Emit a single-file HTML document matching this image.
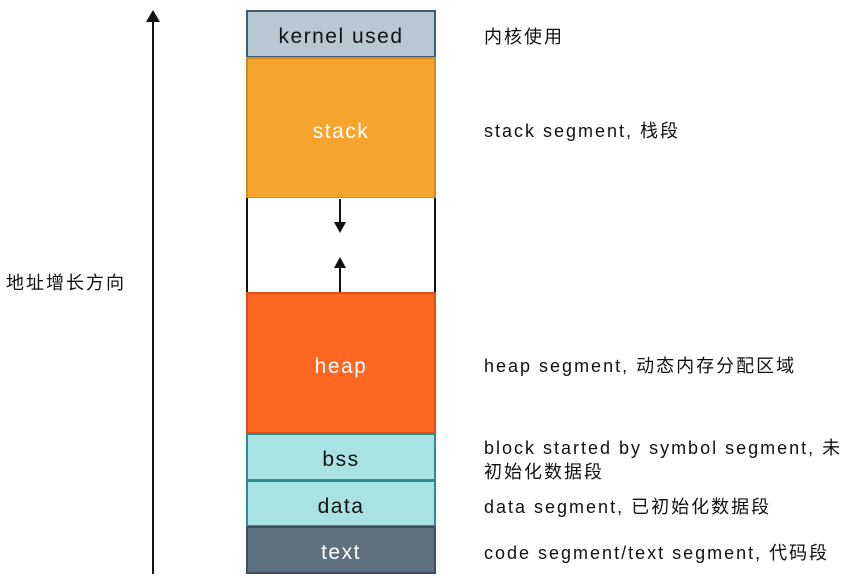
<html><head><style>
body{margin:0;width:844px;height:574px;background:#fff;position:relative;overflow:hidden;font-family:"Liberation Sans","Noto Sans CJK SC",sans-serif}
.b{position:absolute;left:246px;width:190px;box-sizing:border-box;text-align:center;font-size:21px;letter-spacing:1.5px}
.t{position:absolute;left:484px;font-size:18px;color:#111;line-height:24px;letter-spacing:2px}
</style></head><body>
<div class="b" style="top:10px;height:48px;background:#b7c8d3;border:2px solid #3e5d6f;line-height:50px;color:#111">kernel used</div>
<div class="b" style="top:57px;height:142px;background:#f5a42e;border:2px solid #d58a1e;line-height:146px;color:#fff">stack</div>
<div class="b" style="top:198px;height:95px;background:#fff;border:2px solid #111;border-top:none;border-bottom:none"></div>
<div class="b" style="top:292px;height:142px;background:#fd6721;border:2px solid #d9501a;line-height:146px;color:#fff">heap</div>
<div class="b" style="top:433px;height:48px;background:#a8e2e4;border:2px solid #2a8e91;line-height:50px;color:#111">bss</div>
<div class="b" style="top:480px;height:47px;background:#a8e2e4;border:2px solid #2a8e91;line-height:50px;color:#111">data</div>
<div class="b" style="top:526px;height:48px;background:#5e6f7f;border:2px solid #3e4e5c;line-height:50px;color:#fff">text</div>
<svg width="844" height="574" style="position:absolute;left:0;top:0;z-index:5">
<line x1="153" y1="18" x2="153" y2="574" stroke="#111" stroke-width="2"/>
<path d="M146 22 L153 10 L160 22 Z" fill="#111"/>
<line x1="340" y1="199" x2="340" y2="225" stroke="#111" stroke-width="2"/>
<path d="M334 222 L340 233 L346 222 Z" fill="#111"/>
<line x1="340" y1="265" x2="340" y2="292" stroke="#111" stroke-width="2"/>
<path d="M334 268 L340 257 L346 268 Z" fill="#111"/>
</svg>
<div class="t" style="left:6px;top:271px">地址增长方向</div>
<div class="t" style="top:25px">内核使用</div>
<div class="t" style="top:119px">stack segment, 栈段</div>
<div class="t" style="top:354px">heap segment, 动态内存分配区域</div>
<div class="t" style="top:436px;width:360px">block started by symbol segment, 未<br>初始化数据段</div>
<div class="t" style="top:495px">data segment, 已初始化数据段</div>
<div class="t" style="top:541px">code segment/text segment, 代码段</div>
</body></html>
